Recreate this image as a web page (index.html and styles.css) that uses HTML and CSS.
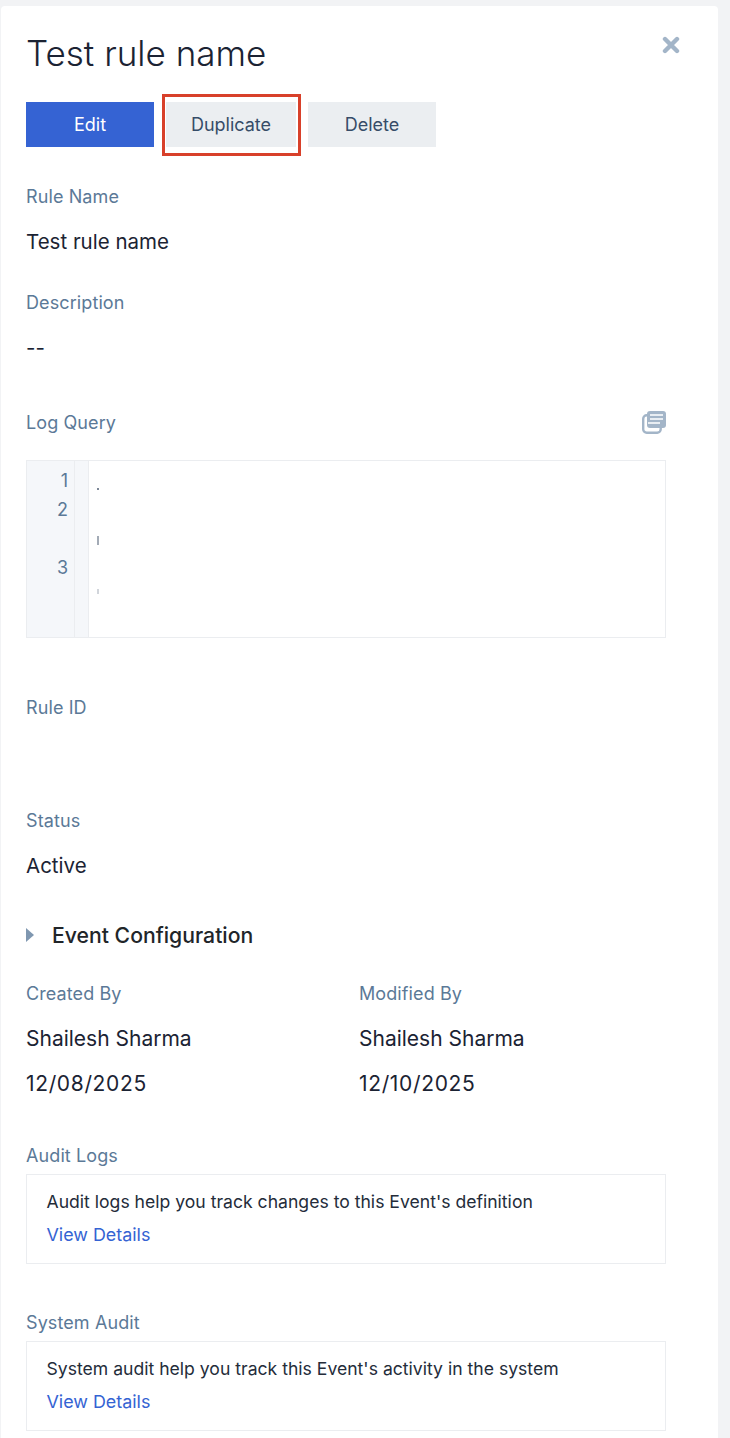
FILE: index.html
```html
<!DOCTYPE html>
<html lang="en">
<head>
<meta charset="utf-8">
<title>Test rule name</title>
<link rel="stylesheet" href="styles.css">
</head>
<body>
<main class="panel">
  <header class="head">
    <h1 class="title">Test rule name</h1>
    <button class="close" aria-label="Close">
      <svg width="18" height="18" viewBox="0 0 18 18"><path d="M3 3l12 12M15 3L3 15" stroke="#a3b5c8" stroke-width="4.400" stroke-linecap="round"/></svg>
    </button>
  </header>
  <div class="actions">
    <button class="btn primary">Edit</button>
    <button class="btn dup">Duplicate<span class="mark"></span></button>
    <button class="btn">Delete</button>
  </div>

  <section class="field f-name">
    <div class="label">Rule Name</div>
    <div class="value">Test rule name</div>
  </section>
  <section class="field f-desc">
    <div class="label">Description</div>
    <div class="value">--</div>
  </section>

  <section class="f-query">
    <div class="label-row">
      <div class="label">Log Query</div>
      <svg class="copy" width="24" height="24" viewBox="0 1 24 24">
        <rect x="1.200" y="5.200" width="17.500" height="17.500" rx="3.500" fill="none" stroke="#a3b5c8" stroke-width="2.400"/>
        <rect x="5" y="1" width="19" height="17" rx="3" fill="#a3b5c8"/>
        <path d="M8 5h13M8 9h13M6 13h12" stroke="#fff" stroke-width="1.600"/>
      </svg>
    </div>
    <div class="code">
      <div class="lines"><span class="n1">1</span><span class="n2">2</span><span class="n3">3</span></div>
      <div class="fold"></div>
      <div class="src"><i class="s1"></i><i class="s2"></i><i class="s3"></i></div>
    </div>
  </section>

  <section class="field f-id">
    <div class="label">Rule ID</div>
  </section>
  <section class="field f-status">
    <div class="label">Status</div>
    <div class="value">Active</div>
  </section>

  <div class="event">
    <svg width="8" height="14" viewBox="0 0 8 14"><path d="M0 0l8 7-8 7z" fill="#7f97b0"/></svg>
    <span>Event Configuration</span>
  </div>

  <div class="meta">
    <div>
      <div class="label">Created By</div>
      <div class="value person">Shailesh Sharma</div>
      <div class="value date">12/08/2025</div>
    </div>
    <div>
      <div class="label">Modified By</div>
      <div class="value person">Shailesh Sharma</div>
      <div class="value date">12/10/2025</div>
    </div>
  </div>

  <section class="audit">
    <div class="label">Audit Logs</div>
    <div class="card">
      <p>Audit logs help you track changes to this Event's definition</p>
      <a href="#">View Details</a>
    </div>
  </section>
  <section class="audit second">
    <div class="label">System Audit</div>
    <div class="card">
      <p>System audit help you track this Event's activity in the system</p>
      <a href="#">View Details</a>
    </div>
  </section>
</main>
</body>
</html>
```
FILE: styles.css
```css
* { box-sizing: border-box; }
html, body { margin: 0; height: 1438px; overflow: hidden; }
body {
  background: #f2f3f5;
  font-family: "Inter", "Liberation Sans", sans-serif;
  padding: 6px 12px 0 1px;
  color: #1b2333;
}
.panel {
  background: #fff;
  border-radius: 4px 4px 0 0;
  height: 1432px;
  padding: 0 52px 0 25px;
}
.head { display: flex; justify-content: space-between; height: 96px; position: relative; }
.title {
  margin: 25px 0 0 0;
  font-size: 35px;
  line-height: 44px;
  font-weight: 300;
  color: #1b2333;
}
.close {
  border: 0; background: none; padding: 0;
  margin: 30px 0 0 0;
  width: 18px; height: 18px;
  transform: translateX(14px);
}
.actions { display: flex; gap: 12px; }
.btn {
  position: relative;
  width: 128px; height: 45px;
  border: 0;
  background: #ebeef1;
  color: #364c68;
  font: 400 18px/45px "Inter", "Liberation Sans", sans-serif;
  padding: 0;
}
.btn.dup { width: 130px; }
.btn.primary { background: #3563d3; color: #fff; }
.mark {
  position: absolute;
  left: -4px; right: -5px; top: -8px; bottom: -9px;
  border: 3px solid #d8402a;
}
.label { font-size: 18px; letter-spacing: 0.100px; line-height: 24px; color: #5b7997; font-weight: 400; }
.value { font-size: 20.500px; line-height: 28px; color: #1b2333; font-weight: 400; }
.field .value { margin-top: 19px; }
.person { font-size: 21px; margin-top: 19px; }
.date { margin-top: 17px; font-size: 21px; letter-spacing: 0.650px; }
.f-name { margin-top: 38px; }
.f-desc { margin-top: 35px; }
.f-query { margin-top: 49px; }
.label-row { display: flex; justify-content: space-between; align-items: center; }
.copy { display: block; }
.code {
  margin-top: 25px;
  height: 178px;
  border: 1px solid #ebedf0;
  display: flex;
}
.lines {
  width: 48px;
  background: #f5f7fa;
  border-right: 1px solid #ebedf0;
  position: relative;
  color: #5b7997;
  font-size: 18px;
  line-height: 24px;
}
.lines span { position: absolute; right: 6px; }
.n1 { top: 8px; } .n2 { top: 37px; } .n3 { top: 95px; }
.fold { width: 14px; background: #f5f7fa; border-right: 1px solid #ebedf0; }
.src { position: relative; flex: 1; }
.src i { position: absolute; left: 8px; width: 2px; background: #7c8797; }
.s1 { top: 27px; height: 2px; }
.s2 { top: 75px; height: 9px; width: 3px; opacity: .7; }
.s3 { top: 128px; height: 5px; opacity: .35; }
.f-id { margin-top: 58px; }
.f-status { margin-top: 89px; }
.event {
  margin-top: 41px;
  display: flex;
  align-items: center;
  gap: 18px;
  font-size: 21.200px;
  line-height: 28px;
  font-weight: 500;
  color: #212529;
}
.meta { display: grid; grid-template-columns: 333px 1fr; margin-top: 33px; }
.audit { margin-top: 46px; }
.audit.second { margin-top: 47px; }
.audit .label { line-height: 24px; }
.card {
  margin-top: 6px;
  height: 90px;
  width: 640px;
  border: 1px solid #ebedf0;
  padding: 13px 19.500px;
}
.card p { margin: 0; font-size: 17.600px; line-height: 28px; color: #242c3a; }
.card a { display: block; margin-top: 5px; font-size: 17.900px; line-height: 28px; color: #3563d3; text-decoration: none; }
```
